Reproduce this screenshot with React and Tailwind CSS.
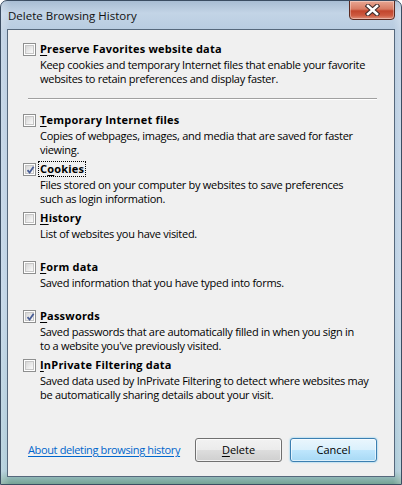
import React from "react";

function Box({ checked }) {
  return (
    <div className="w-[13px] h-[13px] shrink-0 border border-[#8e8f8f] bg-white p-px">
      <div className="w-full h-full border border-[#c6c6c6] bg-[linear-gradient(135deg,#d6d6d6,#fbfbfb)] relative">
        {checked && (
          <svg className="absolute left-[-1px] top-[-1px]" width="11" height="11" viewBox="0 0 11 11">
            <path d="M2.5 5.2 L4.6 7.6 L8.6 1.8" fill="none" stroke="#4a5f97" strokeWidth="1.8" />
          </svg>
        )}
      </div>
    </div>
  );
}

function Item({ keyChar, pre, post, lines, checked, focus }) {
  return (
    <div className="h-[49px] flex flex-col">
      <div className="h-[16px] flex items-center">
        <Box checked={checked} />
        <span className={"ml-[3px] pl-px pr-px leading-[14px] font-bold tracking-[0.2px] " + (focus ? "outline outline-1 outline-dotted outline-black" : "")}>
          {pre}
          <span className="underline underline-offset-2">{keyChar}</span>
          {post}
        </span>
      </div>
      <div className="pt-px pl-[17px] leading-[14px] tracking-[-0.28px]">
        {lines.map((l, i) => (
          <div key={i} className="h-[14px] whitespace-nowrap">{l}</div>
        ))}
      </div>
    </div>
  );
}

export default function App() {
  return (
    <div
      className="w-[402px] h-[485px] relative overflow-hidden rounded-t-[7px] border border-[#3b4d62] bg-[linear-gradient(180deg,#a8bdd3_0px,#c3d4e6_12px,#b7cbe0_30px,#b9cfe3_300px,#a8c8d6_470px,#6e9e8a_485px)] text-black text-[11px]"
      style={{ fontFamily: '"Open Sans", "Noto Sans", sans-serif' }}
    >
      <div className="absolute inset-0 bg-[linear-gradient(90deg,rgba(255,255,255,0.25),rgba(255,255,255,0)_10px,rgba(255,255,255,0)_392px,rgba(255,255,255,0.25))]" />
      <div className="relative h-[28px] flex items-center pl-[7px] pt-px text-[11.5px] text-[#111]">
        Delete Browsing History
      </div>
      <div className="absolute top-[-1px] right-[6px] w-[46px] h-[20px] rounded-b-[4px] border border-[#5a2a20] bg-[linear-gradient(180deg,#e8a793_0%,#d77b63_45%,#c2452c_55%,#cd5a40_80%,#e0907a_100%)] flex items-center justify-center shadow-[inset_0_0_0_1px_rgba(255,255,255,0.35)]">
        <svg width="15" height="12" viewBox="0 0 15 12">
          <path d="M3 2 L12 10 M12 2 L3 10" stroke="#3d2a2a" strokeWidth="4.6" strokeLinecap="square" />
          <path d="M3 2 L12 10 M12 2 L3 10" stroke="#ffffff" strokeWidth="2.6" strokeLinecap="square" />
        </svg>
      </div>
      <div className="relative mx-[6px] h-[448px] border border-[#56687c] bg-[#f0f0f0] flex flex-col">
        <div className="pl-[15px] pt-[11px]">
          <div className="h-[49px] flex flex-col">
            <div className="h-[16px] flex items-center">
              <Box />
              <span className="ml-[3px] pl-px leading-[14px] font-bold tracking-[0.2px]">
                <span className="underline underline-offset-2">P</span>reserve Favorites website data
              </span>
            </div>
            <div className="pt-px pl-[17px] leading-[14px] tracking-[-0.28px]">
              <div className="h-[14px] whitespace-nowrap">Keep cookies and temporary Internet files that enable your favorite</div>
              <div className="h-[14px] whitespace-nowrap">websites to retain preferences and display faster.</div>
            </div>
          </div>
          <div className="ml-[5px] w-[349px] h-px bg-[#a0a0a0] mt-[8px] border-b border-white box-content" />
          <div className="mt-[12px]">
            <Item keyChar="T" pre="" post="emporary Internet files" lines={["Copies of webpages, images, and media that are saved for faster", "viewing."]} />
            <Item keyChar="o" pre="C" post="okies" checked focus lines={["Files stored on your computer by websites to save preferences", "such as login information."]} />
            <Item keyChar="H" pre="" post="istory" lines={["List of websites you have visited."]} />
            <Item keyChar="F" pre="" post="orm data" lines={["Saved information that you have typed into forms."]} />
            <Item keyChar="P" pre="" post="asswords" checked lines={["Saved passwords that are automatically filled in when you sign in", "to a website you've previously visited."]} />
            <Item keyChar="I" pre="" post="nPrivate Filtering data" lines={["Saved data used by InPrivate Filtering to detect where websites may", "be automatically sharing details about your visit."]} />
          </div>
        </div>
        <div className="mt-auto mb-[14px] flex items-center pl-[20px]">
          <span className="text-[#0066cc] underline underline-offset-2 w-[167px] whitespace-nowrap tracking-[-0.36px]">About deleting browsing history</span>
          <button className="w-[87px] h-[24px] rounded-[3px] border border-[#707070] bg-[linear-gradient(180deg,#f2f2f2_0%,#ebebeb_50%,#dddddd_51%,#cfcfcf_100%)] shadow-[inset_0_0_0_1px_rgba(255,255,255,0.7)] text-[11px]">
            <span className="underline underline-offset-2">D</span>elete
          </button>
          <button className="ml-[8px] w-[87px] h-[24px] rounded-[3px] border border-[#3c7fb1] bg-[linear-gradient(180deg,#eaf6fd_0%,#d9f0fc_50%,#bee6fd_51%,#a7d9f5_100%)] shadow-[inset_0_0_0_1px_rgba(255,255,255,0.6),0_0_2px_#5ec3f2] text-[11px]">
            Cancel
          </button>
        </div>
      </div>
    </div>
  );
}
